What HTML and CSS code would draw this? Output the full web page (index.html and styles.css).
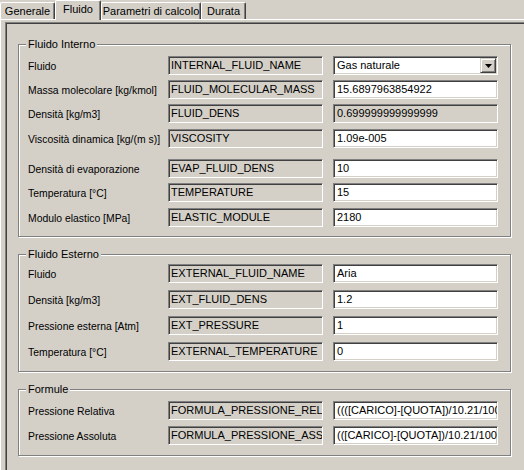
FILE: index.html
```html
<!DOCTYPE html>
<html>
<head>
<meta charset="utf-8">
<link rel="stylesheet" href="styles.css">
</head>
<body>
<div class="tabs">
  <div class="tab t1">Generale</div>
  <div class="tab t2 sel">Fluido</div>
  <div class="tab t3">Parametri di calcolo</div>
  <div class="tab t4">Durata</div>
</div>
<div class="page">
  <div class="frame">
    <div class="group g1">
      <span class="legend">Fluido Interno</span>
      <div class="row"><span class="lbl">Fluido</span><span class="fld ro">INTERNAL_FLUID_NAME</span><span class="fld val combo">Gas naturale<span class="btn"><svg width="7" height="4" viewBox="0 0 7 4"><polygon points="0,0 7,0 3.5,4" fill="#000"/></svg></span></span></div>
      <div class="row m5"><span class="lbl">Massa molecolare [kg/kmol]</span><span class="fld ro">FLUID_MOLECULAR_MASS</span><span class="fld val">15.6897963854922</span></div>
      <div class="row m5"><span class="lbl">Densità [kg/m3]</span><span class="fld ro">FLUID_DENS</span><span class="fld val dis">0.699999999999999</span></div>
      <div class="row m6"><span class="lbl">Viscosità dinamica [kg/(m s)]</span><span class="fld ro">VISCOSITY</span><span class="fld val">1.09e-005</span></div>
      <div class="row m11"><span class="lbl">Densità di evaporazione</span><span class="fld ro">EVAP_FLUID_DENS</span><span class="fld val">10</span></div>
      <div class="row m5"><span class="lbl">Temperatura [°C]</span><span class="fld ro">TEMPERATURE</span><span class="fld val">15</span></div>
      <div class="row m6"><span class="lbl">Modulo elastico [MPa]</span><span class="fld ro">ELASTIC_MODULE</span><span class="fld val">2180</span></div>
    </div>
    <div class="group g2">
      <span class="legend">Fluido Esterno</span>
      <div class="row"><span class="lbl">Fluido</span><span class="fld ro">EXTERNAL_FLUID_NAME</span><span class="fld val">Aria</span></div>
      <div class="row m7"><span class="lbl">Densità [kg/m3]</span><span class="fld ro">EXT_FLUID_DENS</span><span class="fld val">1.2</span></div>
      <div class="row m7"><span class="lbl">Pressione esterna [Atm]</span><span class="fld ro">EXT_PRESSURE</span><span class="fld val">1</span></div>
      <div class="row m7"><span class="lbl">Temperatura [°C]</span><span class="fld ro">EXTERNAL_TEMPERATURE</span><span class="fld val">0</span></div>
    </div>
    <div class="group g3">
      <span class="legend">Formule</span>
      <div class="row"><span class="lbl">Pressione Relativa</span><span class="fld ro">FORMULA_PRESSIONE_RELATIVA</span><span class="fld val">((([CARICO]-[QUOTA])/10.21/1000)</span></div>
      <div class="row m6"><span class="lbl">Pressione Assoluta</span><span class="fld ro">FORMULA_PRESSIONE_ASSOLUTA</span><span class="fld val">(([CARICO]-[QUOTA])/10.21/1000)+1</span></div>
    </div>
  </div>
</div>
</body>
</html>
```
FILE: styles.css
```css
html, body {
  margin: 0;
  padding: 0;
}
body {
  width: 524px;
  height: 470px;
  overflow: hidden;
  background: #D4D0C8;
  font-family: "Liberation Sans", Arial, sans-serif;
  font-size: 11px;
  color: #000;
}
.tabs {
  display: flex;
  align-items: flex-end;
  height: 19px;
  position: relative;
  z-index: 2;
}
.tab {
  box-sizing: border-box;
  height: 17px;
  border-top: 1px solid #fff;
  border-left: 1px solid #fff;
  border-right: 1px solid #404040;
  box-shadow: inset -1px 0 #808080;
  border-radius: 2px 2px 0 0;
  background: #D4D0C8;
  text-align: center;
  line-height: 14px;
  padding-top: 1px;
  white-space: nowrap;
}
.tab.sel {
  height: 20px;
  margin-bottom: -1px;
  padding-top: 1px;
}
.t1 { width: 55px; }
.t2 { width: 46px; }
.t3 { width: 100px; }
.t4 { width: 45px; }
.page {
  border-top: 1px solid #fff;
  border-left: 1px solid #fff;
  padding: 2px 0 0 4px;
}
.frame {
  width: 560px;
  height: 470px;
  border-top: 1px solid #808080;
  border-left: 1px solid #808080;
  box-shadow: inset 1px 1px #404040;
  padding: 21px 0 0 12px;
  box-sizing: border-box;
}
.group {
  position: relative;
  box-sizing: border-box;
  width: 493px;
  border: 1px solid #808080;
  box-shadow: inset 1px 1px #fff, 1px 1px #fff;
  padding-left: 9px;
}
.g1 { padding-top: 11px; padding-bottom: 9px; }
.g2 { margin-top: 17px; padding-top: 9px; padding-bottom: 10px; }
.g3 { margin-top: 17px; padding-top: 11px; padding-bottom: 10px; }
.legend {
  position: absolute;
  top: -7px;
  left: 7px;
  padding: 0 2px;
  line-height: 13px;
  background: #D4D0C8;
}
.row {
  display: flex;
  align-items: center;
  height: 19px;
}
.m5 { margin-top: 5px; }
.m6 { margin-top: 6px; }
.m7 { margin-top: 7px; }
.m11 { margin-top: 11px; }
.lbl {
  width: 140px;
  flex: none;
  white-space: nowrap;
  font-size: 10.4px;
  line-height: 19px;
  padding-top: 1px;
}
.fld {
  box-sizing: border-box;
  height: 19px;
  flex: none;
  border: 1px solid;
  border-color: #808080 #fff #fff #808080;
  box-shadow: inset 1px 1px #404040, inset -1px -1px #D4D0C8;
  line-height: 17px;
  white-space: nowrap;
  overflow: hidden;
}
.ro {
  width: 155px;
  padding-left: 2px;
  background: #D4D0C8;
}
.val {
  width: 165px;
  margin-left: 10px;
  padding-left: 3px;
  background: #fff;
}
.val.dis {
  background: #D4D0C8;
}
.combo {
  position: relative;
}
.btn {
  position: absolute;
  top: 1px;
  right: 1px;
  width: 16px;
  height: 15px;
  box-sizing: border-box;
  background: #D4D0C8;
  border: 1px solid;
  border-color: #D4D0C8 #404040 #404040 #D4D0C8;
  box-shadow: inset 1px 1px #fff, inset -1px -1px #808080;
  display: flex;
  align-items: center;
  justify-content: center;
}
.btn svg {
  display: block;
}
```
